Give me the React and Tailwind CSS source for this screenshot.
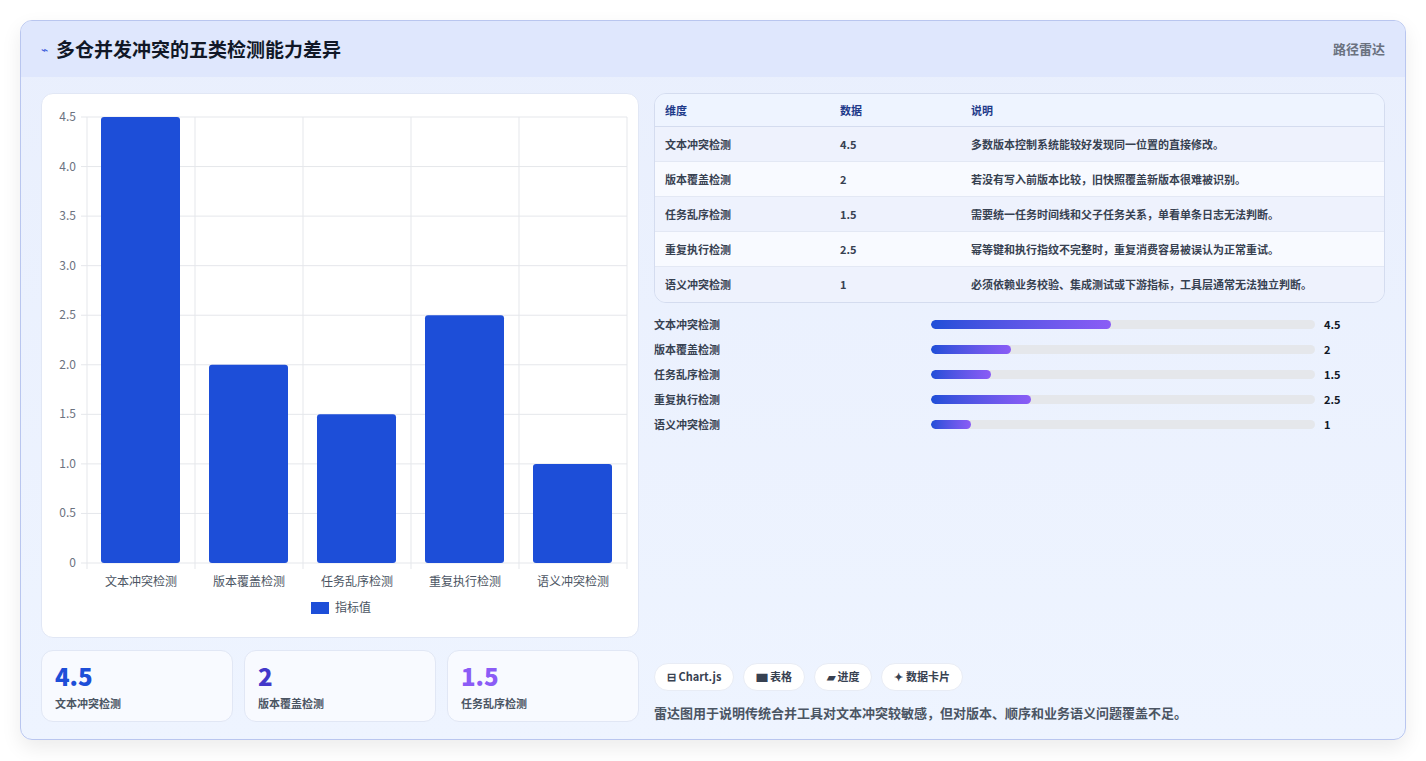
const data = [
  { name: "文本冲突检测", v: 4.5, note: "多数版本控制系统能较好发现同一位置的直接修改。" },
  { name: "版本覆盖检测", v: 2, note: "若没有写入前版本比较，旧快照覆盖新版本很难被识别。" },
  { name: "任务乱序检测", v: 1.5, note: "需要统一任务时间线和父子任务关系，单看单条日志无法判断。" },
  { name: "重复执行检测", v: 2.5, note: "幂等键和执行指纹不完整时，重复消费容易被误认为正常重试。" },
  { name: "语义冲突检测", v: 1, note: "必须依赖业务校验、集成测试或下游指标，工具层通常无法独立判断。" },
];

const font = { fontFamily: '"Noto Sans CJK SC", "Noto Sans", sans-serif' };

function Chart() {
  const x0 = 45, x1 = 585, yTop = 23, yBot = 469;
  const unit = (yBot - yTop) / 4.5;
  const ticks = [0, 0.5, 1, 1.5, 2, 2.5, 3, 3.5, 4, 4.5];
  const w = (x1 - x0) / 5;
  return (
    <svg width="598" height="543" className="block">
      {ticks.map((t) => {
        const y = yBot - t * unit;
        return (
          <g key={t}>
            <line x1={x0 - 6} x2={x1} y1={y} y2={y} stroke="#e5e7eb" />
            <text x={x0 - 11} y={y + 4} textAnchor="end" fontSize="12" fill="#6b7280">
              {t === 0 ? "0" : t.toFixed(1)}
            </text>
          </g>
        );
      })}
      {[0, 1, 2, 3, 4, 5].map((i) => (
        <line key={i} x1={x0 + i * w} x2={x0 + i * w} y1={yTop} y2={yBot + 6} stroke="#e5e7eb" />
      ))}
      {data.map((d, i) => (
        <g key={d.name}>
          <rect x={x0 + i * w + 14} y={yBot - d.v * unit} width={w - 29} height={d.v * unit} rx="3" fill="#1d4ed8" />
          <text x={x0 + i * w + w / 2} y={yBot + 23} textAnchor="middle" fontSize="12" fill="#4b5563">{d.name}</text>
        </g>
      ))}
      <rect x="269" y="508" width="18" height="12" fill="#1d4ed8" />
      <text x="293" y="518" fontSize="12" fill="#4b5563">指标值</text>
    </svg>
  );
}

export default function App() {
  return (
    <div className="min-h-screen bg-white p-5" style={font}>
      <div className="h-[720px] rounded-xl border border-[#b9c6ef] bg-gradient-to-b from-[#e9effd] to-[#eef4ff] overflow-hidden shadow-[0_8px_20px_rgba(0,0,0,0.08)] flex flex-col">
        <div className="h-[56px] bg-[#dfe7fd] flex items-center justify-between px-5 shrink-0">
          <div className="flex items-center gap-2">
            <span className="text-[#3b5bdb] text-xs">⌁</span>
            <h1 className="text-[19px] font-bold text-[#111827]">多仓并发冲突的五类检测能力差异</h1>
          </div>
          <span className="text-[13px] text-[#6b7280] font-semibold">路径雷达</span>
        </div>
        <div className="flex gap-[15px] px-5 pt-4 pb-5 flex-1">
          <div className="w-[598px] flex flex-col gap-3">
            <div className="bg-white rounded-xl border border-[#e1e7f5]">
              <Chart />
            </div>
            <div className="grid grid-cols-3 gap-[11px]">
              {[
                ["4.5", "文本冲突检测", "text-[#1d4ed8]"],
                ["2", "版本覆盖检测", "text-[#4338ca]"],
                ["1.5", "任务乱序检测", "text-[#8b5cf6]"],
              ].map(([n, l, c]) => (
                <div key={l} className="h-[72px] rounded-xl bg-[#f8faff] border border-[#e1e7f5] px-[13px] pt-[10px]">
                  <div className={`text-[24px] font-extrabold leading-[30px] ${c}`}>{n}</div>
                  <div className="text-[11px] text-[#4b5563] mt-1 font-semibold">{l}</div>
                </div>
              ))}
            </div>
          </div>
          <div className="flex-1 flex flex-col">
            <div className="rounded-xl border border-[#d4dcef] overflow-hidden text-[11px] font-semibold">
              <div className="flex h-[33px] items-center bg-[#eef4ff] border-b border-[#d4dcef] text-[#1e3a8a]">
                <div className="w-[175px] pl-[10px]">维度</div>
                <div className="w-[131px] pl-[10px]">数据</div>
                <div className="flex-1 pl-[10px]">说明</div>
              </div>
              {data.map((d, i) => (
                <div key={d.name} className={`flex h-[35px] items-center text-[#374151] ${i % 2 ? "bg-[#f8faff]" : "bg-[#eef2fd]"} ${i < 4 ? "border-b border-[#e3e8f4]" : ""}`}>
                  <div className="w-[175px] pl-[10px]">{d.name}</div>
                  <div className="w-[131px] pl-[10px]">{d.v}</div>
                  <div className="flex-1 pl-[10px]">{d.note}</div>
                </div>
              ))}
            </div>
            <div className="flex flex-col gap-[7px] mt-3 text-[11px] font-semibold text-[#374151]">
              {data.map((d) => (
                <div key={d.name} className="flex items-center h-[18px]">
                  <div className="w-[277px]">{d.name}</div>
                  <div className="w-[384px] h-[9px] rounded-full bg-[#e5e7eb] overflow-hidden">
                    <div className="h-full rounded-full bg-gradient-to-r from-[#1d4ed8] to-[#8b5cf6]" style={{ width: `${(d.v / 9.6) * 100}%` }} />
                  </div>
                  <div className="ml-[9px] text-[#111827]">{d.v}</div>
                </div>
              ))}
            </div>
            <div className="mt-auto">
              <div className="flex gap-[9px] text-[11px] font-semibold text-[#374151]">
                {["⊟ Chart.js", "▆ 表格", "▰ 进度", "✦ 数据卡片"].map((t) => (
                  <span key={t} className="h-[28px] px-[12px] rounded-full bg-white border border-[#e8ecf5] flex items-center">{t}</span>
                ))}
              </div>
              <p className="mt-[12px] text-[13px] text-[#4b5563] font-semibold">雷达图用于说明传统合并工具对文本冲突较敏感，但对版本、顺序和业务语义问题覆盖不足。</p>
            </div>
          </div>
        </div>
      </div>
    </div>
  );
}
